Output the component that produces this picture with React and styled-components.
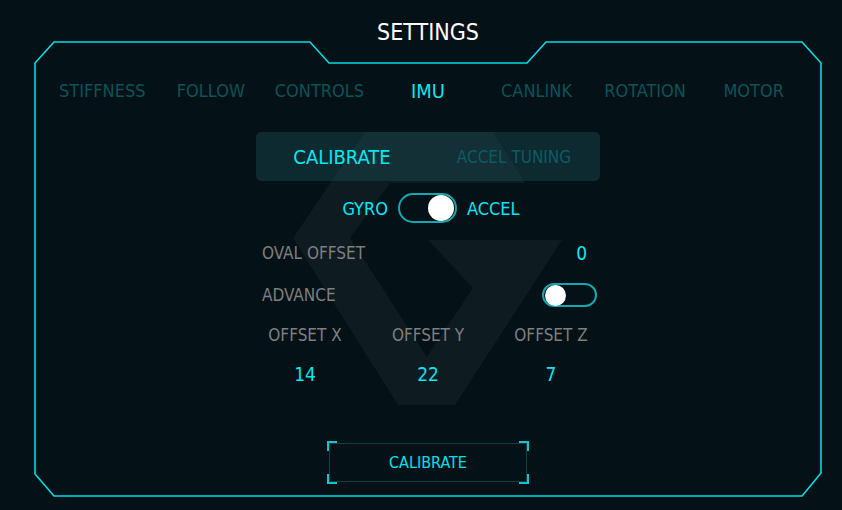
import React, { useState } from "react";
import styled, { createGlobalStyle } from "styled-components";

const GlobalStyle = createGlobalStyle`
  html, body {
    margin: 0;
    padding: 0;
    background: #041117;
  }
  body {
    font-family: "DejaVu Sans Condensed", "DejaVu Sans", sans-serif;
    font-stretch: condensed;
  }
`;

const TABS = ["STIFFNESS", "FOLLOW", "CONTROLS", "IMU", "CANLINK", "ROTATION", "MOTOR"];
const SUB_TABS = ["CALIBRATE", "ACCEL TUNING"];

export default function App() {
  const [tab, setTab] = useState("IMU");
  const [subTab, setSubTab] = useState("CALIBRATE");
  const [accel, setAccel] = useState(true);
  const [advance, setAdvance] = useState(false);
  const offsets = [
    { axis: "X", value: 14 },
    { axis: "Y", value: 22 },
    { axis: "Z", value: 7 },
  ];

  return (
    <>
      <GlobalStyle />
      <Page>
        <Title>SETTINGS</Title>
        <Panel>
          <Frame viewBox="0 0 788 456" aria-hidden="true">
            <polygon
              points="331,91 459,91 491,142 356,142 316,197 393,316 439,247 394,199 528,199 421,364 364,364 259,197"
              fill="rgba(255,255,255,0.045)"
            />
            <polygon
              points="1,22 20,1 276,1 295,22 493,22 512,1 768,1 787,22 787,432 768,455 20,455 1,433"
              fill="none"
              stroke="#00dde6"
              strokeWidth="1.6"
            />
          </Frame>
          <Content>
            <TabRow>
              {TABS.map((t) => (
                <Tab key={t} $active={t === tab} onClick={() => setTab(t)}>
                  {t}
                </Tab>
              ))}
            </TabRow>

            <SubTabs>
              {SUB_TABS.map((t) => (
                <SubTab key={t} $active={t === subTab} onClick={() => setSubTab(t)}>
                  {t}
                </SubTab>
              ))}
            </SubTabs>

            <ModeRow>
              <ModeLabel>GYRO</ModeLabel>
              <Switch $w={59} $h={30} $knob={26} $on={accel} onClick={() => setAccel(!accel)}>
                <Knob />
              </Switch>
              <ModeLabel>ACCEL</ModeLabel>
            </ModeRow>

            <SettingRow>
              <Label>OVAL OFFSET</Label>
              <Value>0</Value>
            </SettingRow>

            <SettingRow $gap={12}>
              <Label>ADVANCE</Label>
              <Switch $w={55} $h={24} $knob={21} $on={advance} onClick={() => setAdvance(!advance)}>
                <Knob />
              </Switch>
            </SettingRow>

            <OffsetGrid>
              {offsets.map((o) => (
                <Label key={o.axis}>OFFSET {o.axis}</Label>
              ))}
              {offsets.map((o) => (
                <OffsetValue key={o.axis}>{o.value}</OffsetValue>
              ))}
            </OffsetGrid>

            <CalibrateButton>
              <Corner $v="top" $h="left" />
              <Corner $v="top" $h="right" />
              <Corner $v="bottom" $h="left" />
              <Corner $v="bottom" $h="right" />
              CALIBRATE
            </CalibrateButton>
          </Content>
        </Panel>
      </Page>
    </>
  );
}

const Page = styled.div`
  width: 842px;
  height: 510px;
  overflow: hidden;
`;

const Title = styled.div`
  height: 41px;
  box-sizing: border-box;
  padding-top: 20px;
  line-height: 24px;
  text-align: center;
  font-size: 23px;
  color: #ffffff;
  padding-left: 14px;
`;

const Panel = styled.div`
  position: relative;
  margin-left: 34px;
  width: 788px;
  height: 456px;
`;

const Frame = styled.svg`
  position: absolute;
  inset: 0;
  width: 788px;
  height: 456px;
  z-index: 0;
`;

const Content = styled.div`
  position: relative;
  z-index: 1;
  display: flex;
  flex-direction: column;
  align-items: center;
  padding: 0 14px;
`;

const TabRow = styled.div`
  margin-top: 35px;
  width: 760px;
  height: 30px;
  display: grid;
  grid-template-columns: repeat(7, 1fr);
  align-items: center;
`;

const Tab = styled.div`
  text-align: center;
  cursor: pointer;
  font-size: ${(p) => (p.$active ? "20px" : "18px")};
  color: ${(p) => (p.$active ? "#00e8f2" : "#0b5358")};
  line-height: 30px;
`;

const SubTabs = styled.div`
  margin-top: 26px;
  width: 344px;
  height: 49px;
  border-radius: 5px;
  background: rgba(26, 78, 84, 0.42);
  display: grid;
  grid-template-columns: 1fr 1fr;
  align-items: center;
`;

const SubTab = styled.div`
  text-align: center;
  cursor: pointer;
  font-size: ${(p) => (p.$active ? "20px" : "17px")};
  color: ${(p) => (p.$active ? "#00e8f2" : "#0b5c62")};
`;

const ModeRow = styled.div`
  margin-top: 12px;
  margin-left: 6px;
  height: 30px;
  display: flex;
  align-items: center;
  gap: 10px;
`;

const ModeLabel = styled.span`
  font-size: 18px;
  color: #00e8f2;
`;

const Knob = styled.span`
  display: block;
  border-radius: 50%;
  background: #ffffff;
`;

const Switch = styled.div`
  box-sizing: border-box;
  width: ${(p) => p.$w}px;
  height: ${(p) => p.$h}px;
  border: 2px solid #10a9b0;
  border-radius: ${(p) => p.$h / 2}px;
  display: flex;
  align-items: center;
  justify-content: ${(p) => (p.$on ? "flex-end" : "flex-start")};
  padding: 0 1px;
  cursor: pointer;
  ${Knob} {
    width: ${(p) => p.$knob}px;
    height: ${(p) => p.$knob}px;
  }
`;

const SettingRow = styled.div`
  margin-top: ${(p) => p.$gap ?? 15}px;
  margin-left: 2px;
  width: 336px;
  box-sizing: border-box;
  padding-left: 1px;
  height: 30px;
  display: flex;
  align-items: center;
  justify-content: space-between;
`;

const Label = styled.span`
  font-size: 17px;
  color: #7f7f7f;
  text-align: center;
`;

const Value = styled.span`
  font-size: 19px;
  color: #00e8f2;
  padding-right: 10px;
`;

const OffsetGrid = styled.div`
  margin-top: 10px;
  display: grid;
  grid-template-columns: repeat(3, 123px);
  grid-template-rows: 30px 30px;
  row-gap: 9px;
  align-items: center;
  justify-items: center;
`;

const OffsetValue = styled.span`
  font-size: 19px;
  color: #00e8f2;
`;

const CalibrateButton = styled.button`
  position: relative;
  margin-top: 54px;
  width: 198px;
  height: 39px;
  background: transparent;
  border: 1px solid #0e3e43;
  color: #00e0ea;
  font-family: inherit;
  font-stretch: condensed;
  font-size: 16px;
  cursor: pointer;
  padding: 0;
`;

const Corner = styled.span`
  position: absolute;
  width: 8px;
  height: 8px;
  ${(p) => p.$v}: -3px;
  ${(p) => p.$h}: -3px;
  border-${(p) => p.$v}: 2px solid #17c3cb;
  border-${(p) => p.$h}: 2px solid #17c3cb;
`;
